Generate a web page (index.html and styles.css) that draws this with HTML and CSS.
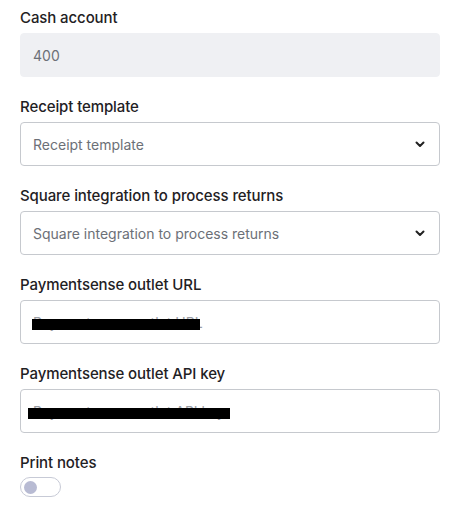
FILE: index.html
```html
<!DOCTYPE html>
<html lang="en">
<head>
<meta charset="utf-8">
<title>Settings</title>
<link rel="stylesheet" href="styles.css">
</head>
<body>
<form class="form">
  <div class="field">
    <label class="label">Cash account</label>
    <div class="control control-disabled">400</div>
  </div>
  <div class="field">
    <label class="label">Receipt template</label>
    <div class="control control-select">
      <span class="placeholder">Receipt template</span>
      <svg class="chevron" width="10" height="7" viewBox="0 0 10 7"><path d="M1.5 1.5 L5 5 L8.5 1.5" fill="none" stroke="#222" stroke-width="2" stroke-linecap="round" stroke-linejoin="round"/></svg>
    </div>
  </div>
  <div class="field">
    <label class="label">Square integration to process returns</label>
    <div class="control control-select">
      <span class="placeholder">Square integration to process returns</span>
      <svg class="chevron" width="10" height="7" viewBox="0 0 10 7"><path d="M1.5 1.5 L5 5 L8.5 1.5" fill="none" stroke="#222" stroke-width="2" stroke-linecap="round" stroke-linejoin="round"/></svg>
    </div>
  </div>
  <div class="field">
    <label class="label">Paymentsense outlet URL</label>
    <div class="control control-redacted">
      <span class="placeholder faint">Paymentsense outlet URL</span>
      <span class="redact redact-url"></span>
    </div>
  </div>
  <div class="field">
    <label class="label">Paymentsense outlet API key</label>
    <div class="control control-redacted">
      <span class="placeholder faint">Paymentsense outlet API key</span>
      <span class="redact redact-key"></span>
    </div>
  </div>
  <div class="field field-last">
    <label class="label label-toggle">Print notes</label>
    <div class="toggle"><span class="knob"></span></div>
  </div>
</form>
</body>
</html>
```
FILE: styles.css
```css
html, body {
  margin: 0;
  padding: 0;
  background: #ffffff;
}
body {
  font-family: Inter, "Liberation Sans", Arial, sans-serif;
  color: #222427;
}
.form {
  width: 420px;
  padding: 5px 0 0 20px;
}
.field {
  display: flex;
  flex-direction: column;
  gap: 5px;
  margin-bottom: 17px;
}
.field-last {
  gap: 4px;
}
.label {
  font-size: 15px;
  line-height: 20px;
  padding-top: 3px;
  font-weight: 500;
  color: #1f2124;
  letter-spacing: -0.1px;
}
.control {
  box-sizing: border-box;
  height: 44px;
  border-radius: 4px;
  border: 1px solid #c6c9ce;
  padding: 0 12px;
  display: flex;
  align-items: center;
  font-size: 14px;
  color: #6c7077;
  position: relative;
}
.control-disabled {
  background: #eff0f3;
  border-color: #eff0f3;
}
.control-select {
  justify-content: space-between;
}
.chevron {
  margin-right: 2px;
}
.placeholder {
  white-space: nowrap;
}
.faint {
  color: #9a9ea5;
}
.redact {
  position: absolute;
  background: #000000;
  height: 11px;
}
.redact-url {
  left: 11px;
  top: 18px;
  width: 168px;
}
.redact-key {
  left: 7px;
  top: 18px;
  width: 202px;
}
.toggle {
  box-sizing: border-box;
  width: 41px;
  height: 20px;
  border: 1px solid #c7cad6;
  border-radius: 10px;
  display: flex;
  align-items: center;
  padding-left: 3px;
}
.knob {
  width: 13px;
  height: 13px;
  border-radius: 50%;
  background: #b8bbd3;
}
```
